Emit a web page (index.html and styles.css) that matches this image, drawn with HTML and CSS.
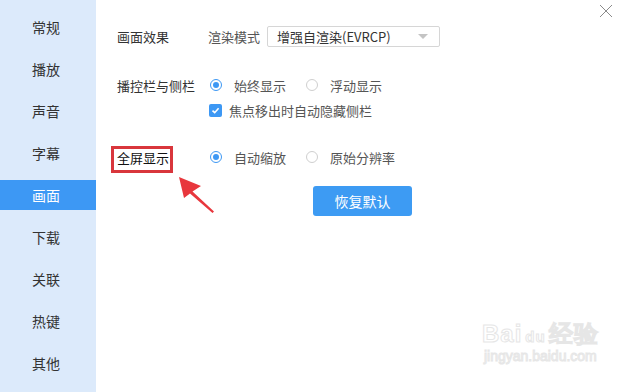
FILE: index.html
```html
<!DOCTYPE html>
<html>
  <head>
    <title>设置 - 画面</title>
    <link rel="stylesheet" href="styles.css">
  </head>
  <body>
    <div class="window">
      <ul class="side">
        <li class="side-item">常规</li>
        <li class="side-item">播放</li>
        <li class="side-item">声音</li>
        <li class="side-item">字幕</li>
        <li class="side-item active">画面</li>
        <li class="side-item">下载</li>
        <li class="side-item">关联</li>
        <li class="side-item">热键</li>
        <li class="side-item">其他</li>
      </ul>

      <div class="main">
        <div class="row row-effect">
          <span class="label">画面效果</span>
          <span class="sub">渲染模式</span>
          <div class="select">
            <span>增强自渲染(EVRCP)</span>
            <span class="caret"></span>
          </div>
        </div>

        <div class="row row-bar">
          <span class="label">播控栏与侧栏</span>
          <span class="radio on"></span><span class="opt">始终显示</span>
          <span class="radio"></span><span class="opt">浮动显示</span>
        </div>
        <div class="row row-check">
          <span class="label"></span>
          <span class="check">
            <svg width="9" height="9" viewBox="0 0 9 9"><path d="M1.5 4.6 L3.7 6.7 L7.6 2.3" fill="none" stroke="#fff" stroke-width="1.6"/></svg>
          </span>
          <span class="opt">焦点移出时自动隐藏侧栏</span>
        </div>

        <div class="row row-full">
          <span class="label marked">全屏显示</span>
          <span class="radio on"></span><span class="opt">自动缩放</span>
          <span class="radio"></span><span class="opt">原始分辨率</span>
        </div>

        <button class="reset">恢复默认</button>

        <!-- annotation arrow -->
        <svg class="arrow" width="50" height="50" viewBox="0 0 50 50">
          <polygon points="9,7 14,28 20,23.5 42.5,43 44,41.5 22.5,21.5 31,16" fill="#e8373d"/>
        </svg>

        <div class="watermark">
          <div class="wm-logo">Bai<span class="wm-du">du</span>经验</div>
          <div class="wm-url">jingyan.baidu.com</div>
        </div>
      </div>

      <svg class="close" width="14" height="14" viewBox="0 0 14 14">
        <path d="M1 1 L13 13 M13 1 L1 13" stroke="#8a8a8a" stroke-width="1"/>
      </svg>
    </div>
  </body>
</html>
```

FILE: styles.css
```css
html,
body {
  margin: 0;
  padding: 0;
  height: 100%;
  overflow: hidden;
  background: #fff;
  font-family: "Noto Sans CJK SC", "Noto Sans", sans-serif;
  color: #333333;
}

.window {
  position: relative;
  display: flex;
  width: 632px;
  height: 392px;
}

/* left menu */
.side {
  width: 96px;
  margin: 0;
  padding: 12px 0 0;
  list-style: none;
  background: #dceafb;
  display: flex;
  flex-direction: column;
  gap: 12px;
}
.side-item {
  height: 30px;
  line-height: 30px;
  padding-left: 32px;
  font-size: 14px;
  color: #333333;
}
.side-item.active {
  background: #3d98f4;
  color: #fff;
}

/* settings area */
.main {
  position: relative;
  flex: 1;
  padding: 26px 0 0 21px;
  font-size: 13px;
}
.row {
  display: flex;
  align-items: center;
  height: 20px;
}
.label {
  width: 91px;
  flex: none;
  color: #333333;
}
.row-effect {
  height: 21px;
}
.row-bar {
  margin-top: 28px;
}
.row-check {
  margin-top: 5px;
}
.row-full {
  margin-top: 27px;
}

.sub {
  color: #555555;
  margin-right: 7px;
}
.select {
  box-sizing: border-box;
  width: 173px;
  height: 21px;
  border: 1px solid #d6d6d6;
  border-radius: 2px;
  display: flex;
  align-items: center;
  justify-content: space-between;
  padding: 0 11px 0 9px;
  color: #333333;
}
.caret {
  width: 0;
  height: 0;
  border-left: 5px solid transparent;
  border-right: 5px solid transparent;
  border-top: 5px solid #c4c4c4;
}

.radio {
  box-sizing: border-box;
  width: 12px;
  height: 12px;
  margin-left: 2px;
  border: 1px solid #cfcfcf;
  border-radius: 50%;
  flex: none;
  position: relative;
}
.radio.on {
  border-color: #3d98f4;
}
.radio.on::after {
  content: "";
  position: absolute;
  left: 2px;
  top: 2px;
  width: 6px;
  height: 6px;
  border-radius: 50%;
  background: #3d98f4;
}
.opt {
  margin-left: 12px;
  margin-right: 18px;
  color: #555555;
}
.row-check .opt {
  margin-left: 7px;
}
.check {
  width: 13px;
  height: 13px;
  margin-left: 1px;
  border-radius: 2px;
  background: #3d98f4;
  display: flex;
  align-items: center;
  justify-content: center;
  flex: none;
}

.reset {
  display: block;
  margin: 19px 0 0 196px;
  width: 99px;
  height: 30px;
  border: none;
  border-radius: 3px;
  background: #3d9bf3;
  color: #fff;
  font-family: inherit;
  font-size: 14px;
  cursor: pointer;
}

/* red annotation */
.marked {
  position: relative;
  color: #111;
}
.marked::after {
  content: "";
  position: absolute;
  left: -6px;
  top: -2px;
  width: 62px;
  height: 27px;
  box-sizing: border-box;
  border: 3px solid #d9363c;
}
.arrow {
  position: absolute;
  left: 74px;
  top: 170px;
}

.close {
  position: absolute;
  left: 599px;
  top: 4px;
}

/* faint site watermark */
.watermark {
  position: absolute;
  left: 386px;
  top: 318px;
  color: #ffffff;
  -webkit-text-stroke: 1px #e6e6e6;
  font-family: "Liberation Sans", sans-serif;
  text-align: center;
}
.wm-logo {
  font-size: 24px;
  font-weight: bold;
  letter-spacing: 1px;
}
.wm-du {
  font-size: 15px;
  margin: 0 3px;
}
.wm-url {
  font-size: 14px;
  margin-top: -2px;
}
```
